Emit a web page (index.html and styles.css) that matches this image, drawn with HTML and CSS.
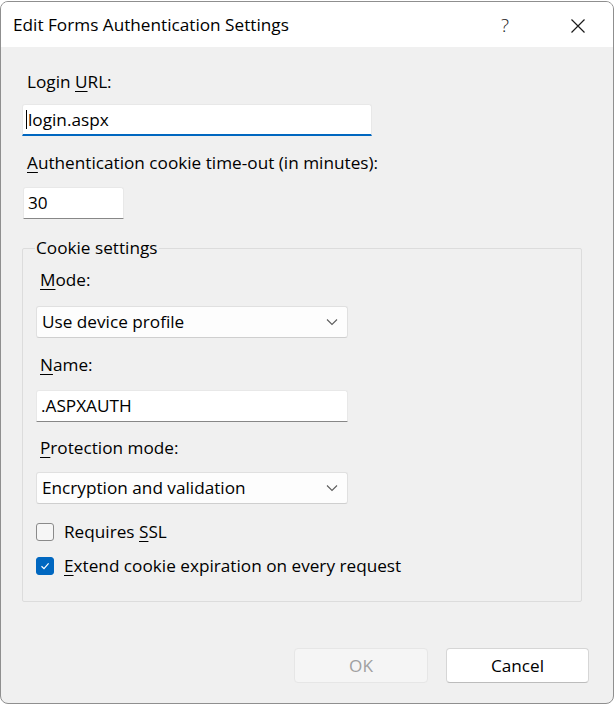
FILE: index.html
```html
<!DOCTYPE html>
<html lang="en">
<head>
<meta charset="utf-8">
<title>Edit Forms Authentication Settings</title>
<link rel="stylesheet" href="styles.css">
</head>
<body>
<div class="window">
  <div class="titlebar">
    <span class="title">Edit Forms Authentication Settings</span>
    <span class="help">?</span>
    <span class="close">
      <svg width="16" height="16" viewBox="0 0 16 16"><path d="M1.5 1.5 L14.5 14.5 M14.5 1.5 L1.5 14.5" stroke="#1a1a1a" stroke-width="1.2" fill="none"/></svg>
    </span>
  </div>
  <div class="content">
    <div class="label l-login">Login <u>U</u>RL:</div>
    <div class="input focused wide"><span class="caret"></span>login.aspx</div>
    <div class="label l-timeout"><u>A</u>uthentication cookie time-out (in minutes):</div>
    <div class="input narrow">30</div>

    <fieldset class="group">
      <legend>Cookie settings</legend>
      <div class="label l-mode"><u>M</u>ode:</div>
      <div class="select">
        <span>Use device profile</span>
        <svg class="chev" width="12" height="8" viewBox="0 0 12 8"><path d="M1 1.5 L6 6.5 L11 1.5" stroke="#5c5c5c" stroke-width="1.1" fill="none"/></svg>
      </div>
      <div class="label l-name"><u>N</u>ame:</div>
      <div class="input field">.ASPXAUTH</div>
      <div class="label l-prot"><u>P</u>rotection mode:</div>
      <div class="select">
        <span>Encryption and validation</span>
        <svg class="chev" width="12" height="8" viewBox="0 0 12 8"><path d="M1 1.5 L6 6.5 L11 1.5" stroke="#5c5c5c" stroke-width="1.1" fill="none"/></svg>
      </div>
      <div class="check c-ssl">
        <span class="box"></span>
        <span>Requires <u>S</u>SL</span>
      </div>
      <div class="check c-extend">
        <span class="box checked">
          <svg width="12" height="12" viewBox="0 0 12 12"><path d="M2.5 6.2 L5 8.6 L9.6 3.4" stroke="#ffffff" stroke-width="1.2" fill="none"/></svg>
        </span>
        <span><u>E</u>xtend cookie expiration on every request</span>
      </div>
    </fieldset>

    <div class="buttons">
      <div class="btn disabled">OK</div>
      <div class="btn cancel">Cancel</div>
    </div>
  </div>
</div>
</body>
</html>
```

FILE: styles.css
```css
html, body {
  margin: 0;
  padding: 0;
  background: #ffffff;
}
body {
  font-family: "Open Sans", "Noto Sans", sans-serif;
  font-size: 17.2px;
  color: #000000;
}
u {
  text-decoration-thickness: 1px;
  text-underline-offset: 3px;
}
.window {
  box-sizing: border-box;
  margin-top: 1px;
  width: 614px;
  height: 703px;
  border: 1px solid #8f8f8f;
  border-radius: 8px;
  background: #f0f0f0;
  overflow: hidden;
  display: flex;
  flex-direction: column;
}
.titlebar {
  height: 45px;
  background: #ffffff;
  display: flex;
  align-items: center;
  flex-shrink: 0;
}
.title {
  margin-left: 12px;
  padding-top: 1px;
  line-height: 20px;
  flex: 1;
}
.help {
  font-size: 19px;
  font-weight: 300;
  color: #1a1a1a;
  width: 20px;
  text-align: center;
  margin-right: 55px;
  padding-top: 1px;
}
.close {
  display: flex;
  width: 16px;
  height: 16px;
  margin-right: 27px;
  margin-top: 3px;
}
.content {
  flex: 1;
  padding: 25px 24px 0 21px;
  display: flex;
  flex-direction: column;
  align-items: flex-start;
}
.label {
  line-height: 20px;
  padding-left: 5px;
}
.l-login { margin-bottom: 12px; }
.l-timeout { margin-top: 17px; margin-bottom: 14px; }
.input {
  box-sizing: border-box;
  height: 32px;
  line-height: 30px;
  background: #ffffff;
  border: 1px solid #e8e8e8;
  border-bottom: 1px solid #878787;
  border-radius: 3px 3px 0 0;
  padding-left: 4px;
  white-space: nowrap;
}
.wide {
  width: 350px;
}
.focused {
  border-bottom: 2px solid #0067c0;
  padding-left: 3px;
  display: flex;
  align-items: center;
}
.caret {
  display: inline-block;
  width: 1px;
  height: 19px;
  background: #000000;
  margin-right: 1px;
}
.narrow {
  width: 101px;
  margin-left: 1px;
  padding-left: 4px;
}
.group {
  box-sizing: border-box;
  width: 560px;
  margin: 19px 0 0 0;
  border: 1px solid #dcdcdc;
  border-radius: 2px;
  padding: 12px 0 25px 13px;
  min-width: 0;
}
.group legend {
  padding: 0 1px;
  margin-left: -1px;
  line-height: 20px;
}
.l-mode { margin-bottom: 16px; padding-left: 4px; }
.l-name { margin-top: 17px; margin-bottom: 15px; padding-left: 4px; }
.l-prot { margin-top: 16px; margin-bottom: 14px; padding-left: 4px; }
.select {
  box-sizing: border-box;
  width: 312px;
  height: 32px;
  background: #fdfdfd;
  border: 1px solid #e0e0e0;
  border-bottom-color: #cfcfcf;
  border-radius: 3px;
  display: flex;
  align-items: center;
  justify-content: space-between;
  padding: 0 9px 0 5px;
  line-height: 30px;
}
.chev {
  display: block;
}
.field {
  width: 312px;
}
.check {
  display: flex;
  align-items: center;
  gap: 10px;
  line-height: 20px;
}
.c-ssl { margin-top: 18px; }
.c-extend { margin-top: 14px; }
.box {
  box-sizing: border-box;
  width: 18px;
  height: 18px;
  border: 1px solid #8a8a8a;
  border-radius: 3px;
  background: #f6f6f6;
  display: flex;
  align-items: center;
  justify-content: center;
  flex-shrink: 0;
}
.box.checked {
  background: #0067c0;
  border-color: #0067c0;
}
.buttons {
  align-self: flex-end;
  display: flex;
  gap: 18px;
  margin-top: 46px;
}
.btn {
  box-sizing: border-box;
  height: 35px;
  line-height: 33px;
  text-align: center;
  border-radius: 4px;
}
.disabled {
  width: 134px;
  background: #f5f5f5;
  border: 1px solid #e6e6e6;
  color: #a0a0a0;
}
.cancel {
  width: 143px;
  background: #ffffff;
  border: 1px solid #d6d6d6;
  border-bottom-color: #bcbcbc;
  color: #000000;
}
```
